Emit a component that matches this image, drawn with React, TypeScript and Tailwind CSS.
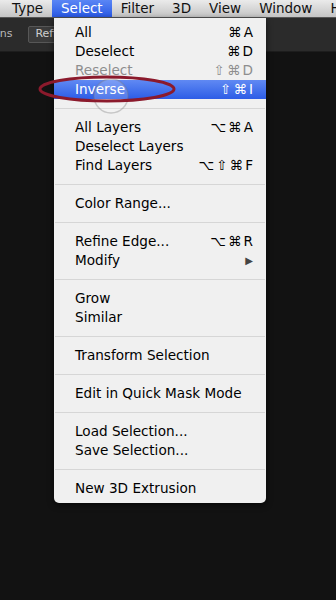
import React from 'react'

type Item =
  | { kind: 'item'; label: string; keys?: string; disabled?: boolean; active?: boolean; submenu?: boolean }
  | { kind: 'sep' }

const items: Item[] = [
  { kind: 'item', label: 'All', keys: '⌘A' },
  { kind: 'item', label: 'Deselect', keys: '⌘D' },
  { kind: 'item', label: 'Reselect', keys: '⇧⌘D', disabled: true },
  { kind: 'item', label: 'Inverse', keys: '⇧⌘I', active: true },
  { kind: 'sep' },
  { kind: 'item', label: 'All Layers', keys: '⌥⌘A' },
  { kind: 'item', label: 'Deselect Layers' },
  { kind: 'item', label: 'Find Layers', keys: '⌥⇧⌘F' },
  { kind: 'sep' },
  { kind: 'item', label: 'Color Range...' },
  { kind: 'sep' },
  { kind: 'item', label: 'Refine Edge...', keys: '⌥⌘R' },
  { kind: 'item', label: 'Modify', submenu: true },
  { kind: 'sep' },
  { kind: 'item', label: 'Grow' },
  { kind: 'item', label: 'Similar' },
  { kind: 'sep' },
  { kind: 'item', label: 'Transform Selection' },
  { kind: 'sep' },
  { kind: 'item', label: 'Edit in Quick Mask Mode' },
  { kind: 'sep' },
  { kind: 'item', label: 'Load Selection...' },
  { kind: 'item', label: 'Save Selection...' },
  { kind: 'sep' },
  { kind: 'item', label: 'New 3D Extrusion' },
]

const menus = ['Type', 'Select', 'Filter', '3D', 'View', 'Window', 'Help']

function Keys({ keys }: { keys: string }) {
  return (
    <span className="flex gap-[2px]">
      {keys.split('').map((k, i) => (
        <span key={i}>{k}</span>
      ))}
    </span>
  )
}

function MenuRow({ item }: { item: Item }) {
  if (item.kind === 'sep') {
    return (
      <div className="h-[19px] flex items-center px-[1px]">
        <div className="h-px w-full bg-[#d6d6d6]" />
      </div>
    )
  }
  const color = item.active ? 'text-white' : item.disabled ? 'text-[#8e8e8e]' : 'text-black'
  return (
    <div
      className={`h-[19px] flex items-center justify-between pl-[21px] pr-[13px] ${color} ${
        item.active ? 'bg-gradient-to-b from-[#6089f3] to-[#2d5ce6]' : ''
      }`}
    >
      <span>{item.label}</span>
      {item.keys && <Keys keys={item.keys} />}
      {item.submenu && <span className="text-[10px] text-[#444]">▶</span>}
    </div>
  )
}

export default function App() {
  return (
    <div
      className="relative w-[336px] h-[600px] overflow-hidden bg-[#121212]"
      style={{ fontFamily: '"DejaVu Sans", "Noto Sans", sans-serif' }}
    >
      {/* mac menu bar */}
      <div className="h-[18px] flex items-center pl-[3px] bg-gradient-to-b from-[#ebebeb] to-[#c4c4c4] border-b border-[#555] text-[13.5px] text-[#111] whitespace-nowrap">
        {menus.map((m) => (
          <div
            key={m}
            className={`h-full flex items-center px-[9px] ${
              m === 'Select' ? 'bg-gradient-to-b from-[#5a86f5] to-[#2a58e4] text-white' : ''
            }`}
          >
            {m}
          </div>
        ))}
      </div>

      {/* options bar */}
      <div className="h-[34px] flex items-center gap-[16px] bg-[#2b2b2b] border-b border-[#1d1d1d] text-[11px] text-[#b8b8b8] whitespace-nowrap">
        <span className="-ml-[30px]">Options</span>
        <div className="h-[17px] px-[6px] flex items-center rounded-[2px] bg-[#3b3b3b] border border-[#575757] text-[#cfcfcf]">
          Refine
        </div>
      </div>

      {/* dropdown */}
      <div className="absolute left-[54px] top-[18px] w-[212px] pt-[5px] pb-[5px] bg-[#f0f0f0] rounded-b-[5px] shadow-[0_2px_6px_rgba(0,0,0,0.6)] text-[13.6px] whitespace-nowrap">
        {items.map((it, i) => (
          <MenuRow key={i} item={it} />
        ))}
      </div>

      {/* cursor + annotation */}
      <svg className="absolute left-0 top-0 pointer-events-none" width="336" height="130">
        <circle cx="111" cy="96" r="17" fill="rgba(255,255,255,0.18)" stroke="rgba(120,120,120,0.35)" strokeWidth="1.5" />
        <ellipse cx="107" cy="89" rx="67" ry="12" fill="none" stroke="#8b1a2c" strokeWidth="3" />
      </svg>
    </div>
  )
}
